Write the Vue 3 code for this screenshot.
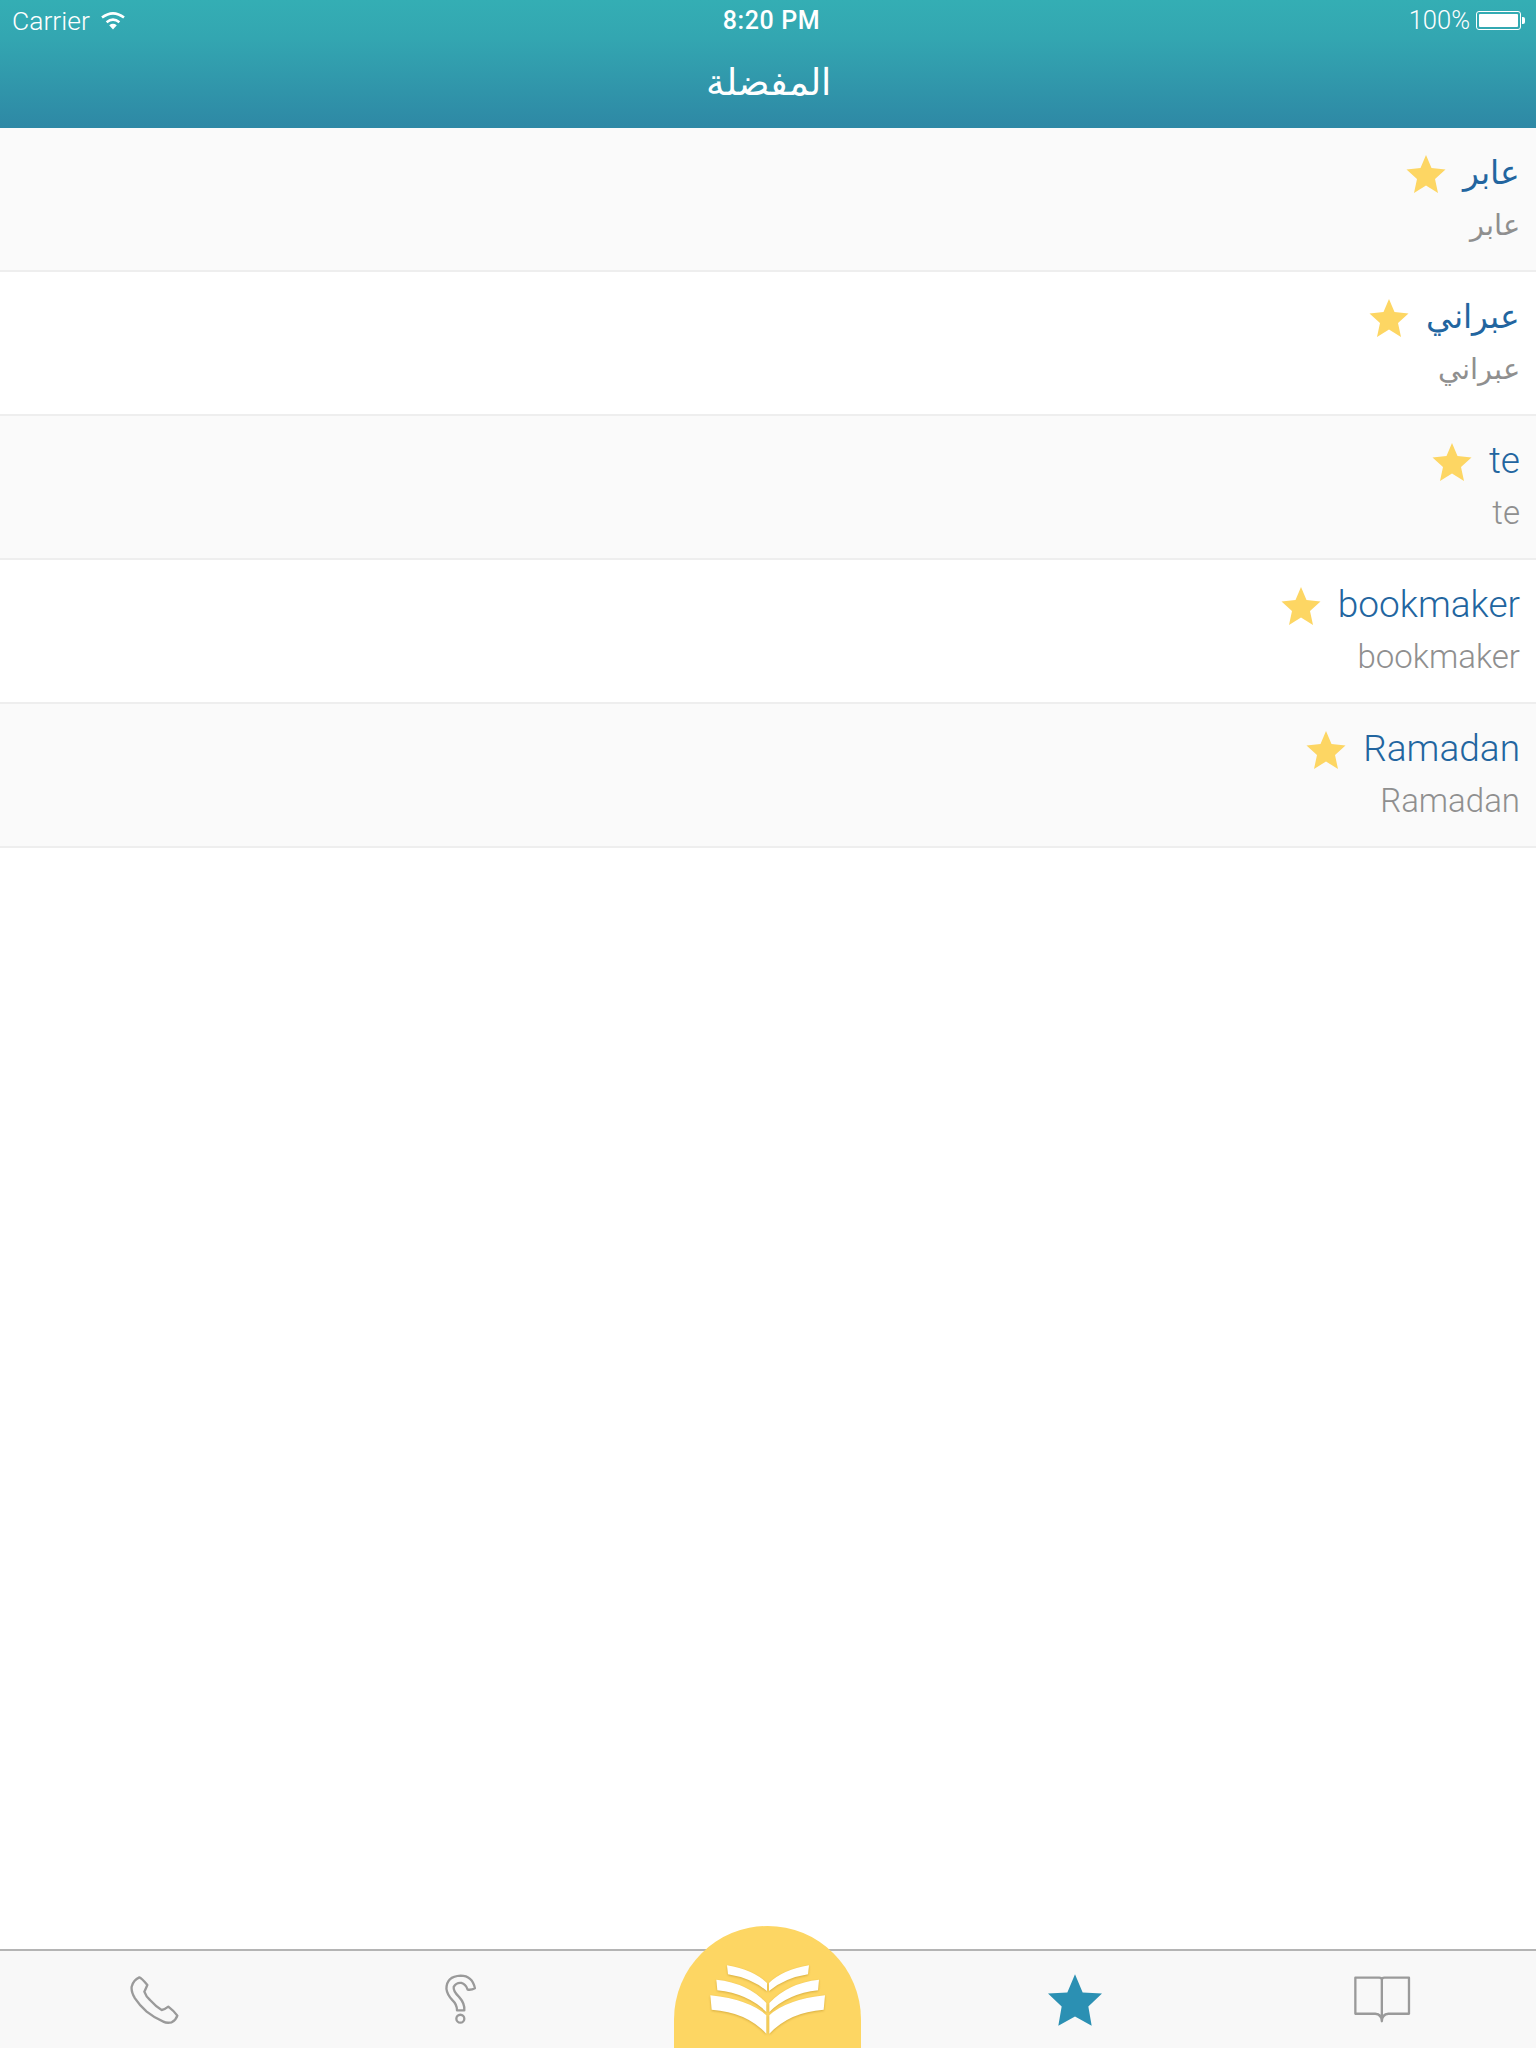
<script setup>
const rows = [
  { text: 'عابر', ar: true },
  { text: 'عبراني', ar: true },
  { text: 'te' },
  { text: 'bookmaker' },
  { text: 'Ramadan' },
]
const bookLeaves = [
  'M262 195 L265 222 Q335 233 382 272 L382 248 Q340 208 262 195 Z',
  'M230 238 L233 270 Q325 280 380 335 L380 308 Q325 248 230 238 Z',
  'M212 285 L216 328 Q320 335 380 400 L380 345 Q330 298 212 285 Z',
  'M508 195 L505 222 Q435 233 388 272 L388 248 Q430 208 508 195 Z',
  'M538 238 L535 270 Q445 280 389 335 L389 308 Q445 248 538 238 Z',
  'M556 285 L552 328 Q450 335 389 400 L389 345 Q440 298 556 285 Z',
]
</script>

<template>
  <div class="screen">
    <header class="top">
      <div class="status">
        <div class="status-left">
          <span class="carrier">Carrier</span>
          <svg class="wifi" viewBox="0 0 26 19" aria-hidden="true">
            <path d="M13 18.5 L9.2 14.2 Q13 11.3 16.8 14.2 Z" fill="#fff" />
            <path d="M6.6 11.2 Q13 6.2 19.4 11.2" fill="none" stroke="#fff" stroke-width="2.6" />
            <path d="M2 6.6 Q13 -2 24 6.6" fill="none" stroke="#fff" stroke-width="2.6" />
          </svg>
        </div>
        <div class="time">8:20 PM</div>
        <div class="status-right">
          <span class="pct">100%</span>
          <span class="battery"><span class="battery-fill"></span></span>
          <span class="nub"></span>
        </div>
      </div>
      <div class="title">المفضلة</div>
    </header>

    <main class="list">
      <div v-for="(row, i) in rows" :key="i" class="row" :class="{ alt: i % 2 === 0, ar: row.ar }">
        <div class="head">
          <svg class="star" viewBox="0 0 40 38" aria-hidden="true">
            <polygon points="20,0 25.5,13 39.5,14.5 29,24 32,38 20,30.5 8,38 11,24 0.5,14.5 14.5,13" fill="#fdd663" />
          </svg>
          <span class="word">{{ row.text }}</span>
        </div>
        <div class="sub">{{ row.text }}</div>
      </div>
    </main>

    <footer class="tabs">
      <div class="tab">
        <svg class="ico-phone" viewBox="90 135 150 150" aria-hidden="true">
          <path d="M118 142 Q125 144 142 165 Q138 175 133 185 Q138 200 150 210 Q168 230 185 240 Q195 238 205 230 Q222 243 232 257 Q228 270 215 277 Q200 280 190 275 Q165 265 140 245 Q118 225 105 205 Q93 185 95 170 Q100 150 118 142 Z" fill="none" stroke="#9a9a9a" stroke-width="7" stroke-linejoin="round" />
        </svg>
      </div>
      <div class="tab">
        <svg class="ico-help" viewBox="130 130 105 160" aria-hidden="true">
          <path d="M226 176 Q218 138 183 138 Q140 140 140 178 Q142 195 158 212 Q172 225 172 243 L194 243 Q196 222 178 202 Q160 185 162 172 Q170 158 185 160 Q198 163 204 180 Q215 182 226 176 Z" fill="none" stroke="#9a9a9a" stroke-width="7" stroke-linejoin="round" />
          <circle cx="182" cy="268" r="12" fill="none" stroke="#9a9a9a" stroke-width="7" />
        </svg>
      </div>
      <div class="tab"></div>
      <div class="tab">
        <svg class="ico-fav" viewBox="84 135 162 155" aria-hidden="true">
          <polygon points="165,135 188,190 246,193 205,232 215,290 165,262 115,290 125,232 84,193 142,190" fill="#2b90b3" />
        </svg>
      </div>
      <div class="tab">
        <svg class="ico-book" viewBox="98 138 175 145" aria-hidden="true">
          <path d="M185 150 Q185 143 177 143 H105 V252 H165 Q185 254 185 275 Q185 254 205 252 H267 V143 H193 Q185 143 185 150 V275" fill="none" stroke="#9a9a9a" stroke-width="7" stroke-linejoin="round" />
        </svg>
      </div>
      <div class="dome">
        <svg class="logo" viewBox="205 185 360 225" aria-hidden="true">
          <path v-for="(d, i) in bookLeaves" :key="i" :d="d" fill="#fff" />
        </svg>
      </div>
    </footer>
  </div>
</template>

<style scoped>
.screen {
  display: flex;
  flex-direction: column;
  height: 2048px;
  width: 1536px;
  background: #fff;
  font-family: "Roboto", "DejaVu Sans", sans-serif;
  font-weight: 300;
  overflow: hidden;
}
.top {
  height: 128px;
  background: linear-gradient(180deg, #34aeb4 0%, #33a6b1 30%, #2e88a5 100%);
  color: #fff;
  display: flex;
  flex-direction: column;
}
.status {
  display: grid;
  grid-template-columns: 1fr auto 1fr;
  align-items: center;
  height: 40px;
  padding: 0 11px 0 12px;
  font-size: 24px;
  font-weight: 400;
}
.status-left {
  display: flex;
  align-items: center;
  gap: 10px;
}
.carrier {
  font-size: 26.5px;
  font-weight: 300;
}
.wifi {
  width: 26px;
  height: 19px;
}
.time {
  font-size: 25px;
  font-weight: 500;
  letter-spacing: 0.6px;
  margin-left: 6px;
}
.status-right {
  display: flex;
  align-items: center;
  justify-content: flex-end;
}
.pct {
  font-size: 25.5px;
  font-weight: 300;
}
.battery {
  margin-left: 6px;
  width: 45px;
  height: 19px;
  border: 1px solid #fff;
  border-radius: 3px;
  padding: 2px;
  box-sizing: border-box;
  display: flex;
}
.battery-fill {
  flex: 1;
  background: #fff;
  border-radius: 1px;
}
.nub {
  width: 3px;
  height: 7px;
  background: #fff;
  border-radius: 0 2px 2px 0;
  margin-left: 1px;
}
.title {
  text-align: center;
  font-size: 37px;
  line-height: 48px;
  margin-top: 19px;
}
.list {
  flex: 1;
}
.row {
  height: 144px;
  box-sizing: border-box;
  padding: 18px 16px 0 0;
  border-bottom: 2px solid #eeeeee;
  display: flex;
  flex-direction: column;
  align-items: flex-end;
}
.row.alt {
  background: #fafafa;
}
.head {
  display: flex;
  align-items: center;
  gap: 17px;
  height: 52px;
}
.star {
  width: 40px;
  height: 38px;
  margin-top: 4px;
}
.word {
  font-size: 37px;
  color: #22659f;
}
.sub {
  font-size: 33px;
  line-height: 52px;
  margin-top: 1px;
  color: #8f8f8f;
}
.ar .word {
  font-size: 33px;
}
.ar .sub {
  font-size: 29px;
}
.tabs {
  position: relative;
  height: 99px;
  box-sizing: border-box;
  border-top: 2px solid #b4b4b4;
  background: #f8f8f8;
  display: grid;
  grid-template-columns: repeat(5, 1fr);
}
.tab {
  display: flex;
  align-items: center;
  justify-content: center;
}
.ico-phone {
  width: 50px;
  height: 50px;
  margin-left: 3px;
}
.ico-help {
  width: 35px;
  height: 53px;
}
.ico-fav {
  width: 54px;
  height: 52px;
}
.ico-book {
  width: 58px;
  height: 48px;
}
.dome {
  position: absolute;
  left: 674px;
  top: -25px;
  width: 187px;
  height: 124px;
  background: #fdd663;
  border-radius: 93.5px 93.5px 0 0;
}
.logo {
  position: absolute;
  left: 34px;
  top: 36px;
  width: 120px;
  height: 75px;
  filter: drop-shadow(0 1px 1px rgba(170, 125, 20, 0.45));
}
</style>
